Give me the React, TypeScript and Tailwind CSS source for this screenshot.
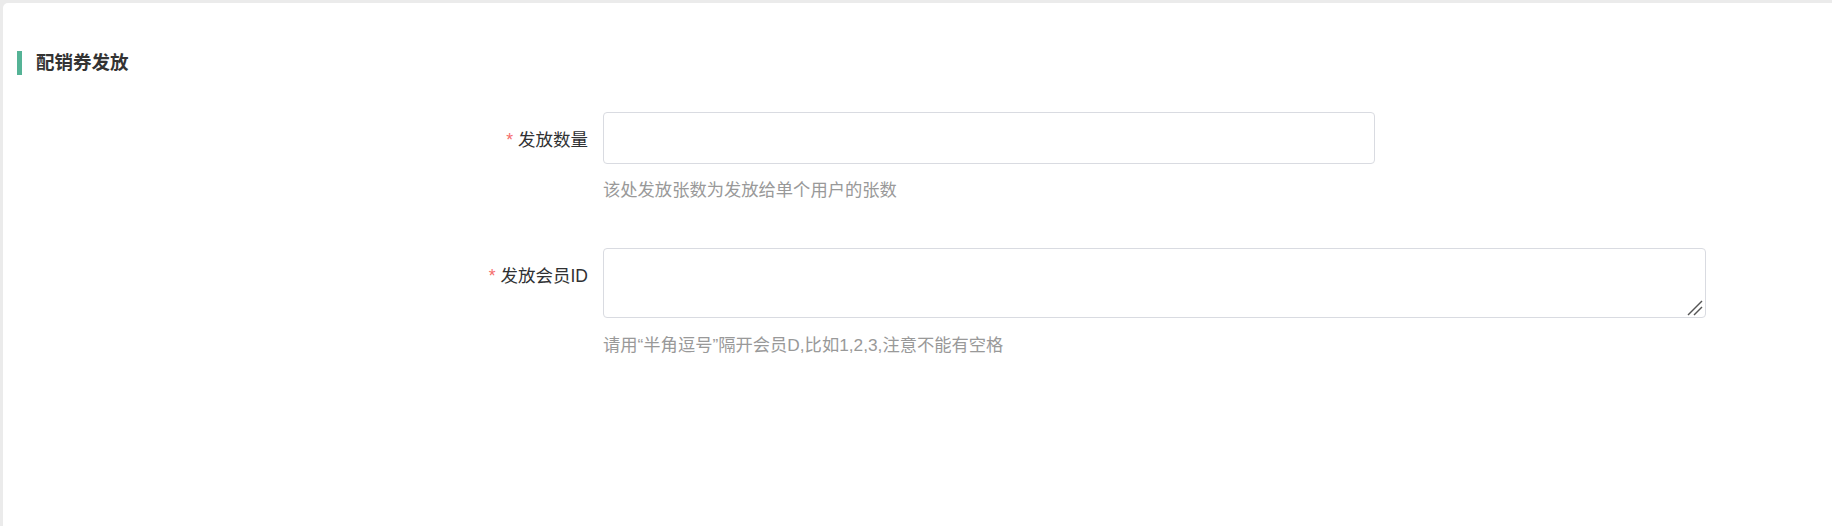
import React from "react";

const font = { fontFamily: '"Liberation Sans", "Noto Sans CJK SC", sans-serif' };

export default function App() {
  return (
    <div
      className="h-[526px] w-full bg-[#ebebeb] pt-[3px] pl-[3px] overflow-hidden"
      style={font}
    >
      <div className="h-full w-full bg-white rounded-tl-[5px] pt-[48px] pl-[14px]">
        <div className="flex items-center h-[24px]">
          <div className="w-[5px] h-[24px] bg-[#55b396]" />
          <div className="ml-[14px] text-[18.5px] font-bold text-[#333] leading-[24px]">
            配销券发放
          </div>
        </div>

        <div className="pl-[386px] mt-[37px]">
          <div className="flex">
            <div className="w-[200px] shrink-0 pr-[15px] text-right h-[52px] pt-[2px] leading-[52px] text-[17.5px] text-[#303133]">
              <span className="text-[#f56c6c] mr-[5px]">*</span>
              发放数量
            </div>
            <div className="flex flex-col">
              <input
                type="text"
                className="block w-[772px] h-[52px] border border-[#d9dbe1] rounded-[4px] bg-white outline-none px-[15px]"
              />
              <div className="mt-[14px] text-[17.3px] leading-[24px] text-[#999]">
                该处发放张数为发放给单个用户的张数
              </div>
            </div>
          </div>

          <div className="flex mt-[46px]">
            <div className="w-[200px] shrink-0 pr-[15px] text-right h-[52px] pt-[2px] leading-[52px] text-[17.5px] text-[#303133]">
              <span className="text-[#f56c6c] mr-[5px]">*</span>
              发放会员ID
            </div>
            <div className="flex flex-col">
              <div className="relative">
                <textarea className="block w-[1103px] h-[70px] resize-none border border-[#d9dbe1] rounded-[4px] bg-white outline-none px-[15px] py-[5px]" />
                <svg
                  className="absolute right-[3px] bottom-[2px]"
                  width="16"
                  height="16"
                  viewBox="0 0 16 16"
                >
                  <line x1="1" y1="15" x2="15" y2="1" stroke="#555" strokeWidth="1.4" />
                  <line x1="7" y1="15" x2="15" y2="7" stroke="#555" strokeWidth="1.4" />
                </svg>
              </div>
              <div className="mt-[15px] text-[17.3px] leading-[24px] text-[#999]">
                请用“半角逗号”隔开会员D,比如1,2,3,注意不能有空格
              </div>
            </div>
          </div>
        </div>
      </div>
    </div>
  );
}
